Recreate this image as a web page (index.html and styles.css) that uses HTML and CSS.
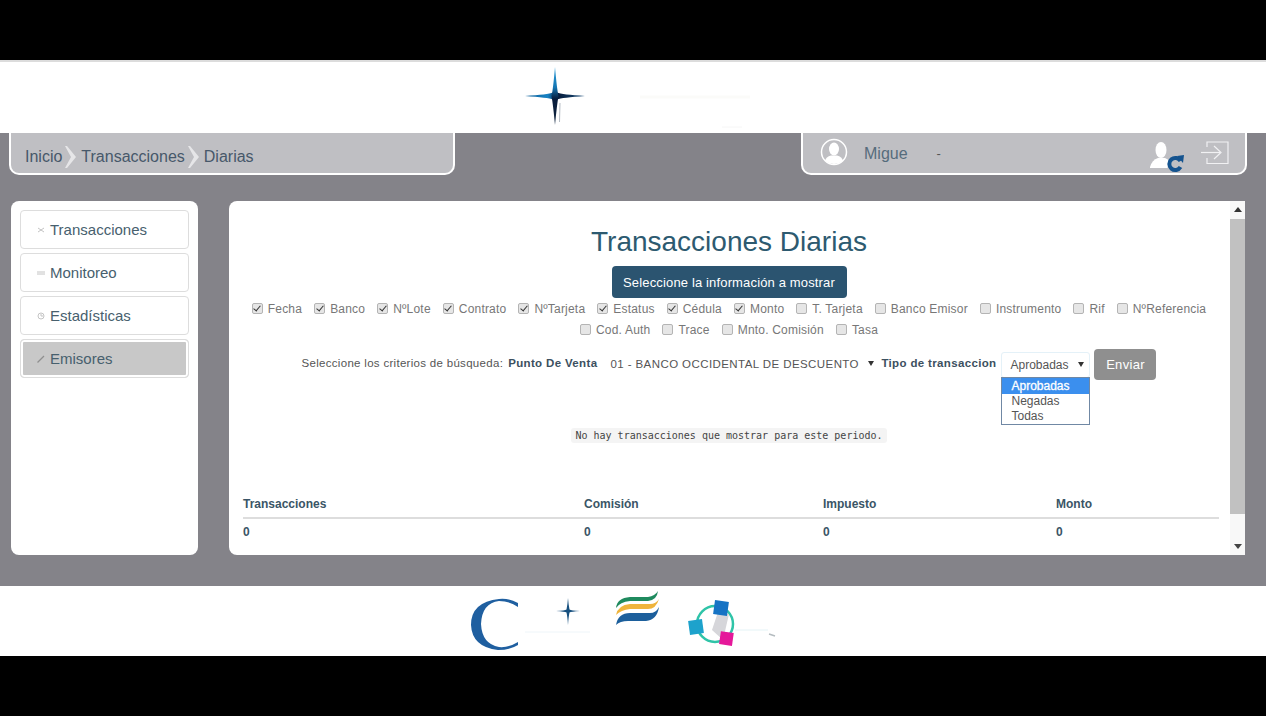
FILE: index.html
```html
<!DOCTYPE html>
<html lang="es">
<head>
  <meta charset="UTF-8" />
  <title>Transacciones Diarias</title>
  <link rel="stylesheet" href="styles.css">
</head>
<body>

<div class="franja"></div>

<header class="cabecera">
  <svg class="logo-top" viewBox="420 62 426 71" width="426" height="71">
    <defs>
      <linearGradient id="estV" x1="0" y1="0" x2="0" y2="1">
        <stop offset="0" stop-color="#2a9ad6"/>
        <stop offset="0.35" stop-color="#1577b4"/>
        <stop offset="0.55" stop-color="#071c3c"/>
        <stop offset="1" stop-color="#12263f"/>
      </linearGradient>
      <linearGradient id="estH" x1="0" y1="0" x2="1" y2="0">
        <stop offset="0" stop-color="#0f5f96"/>
        <stop offset="0.38" stop-color="#1782c4"/>
        <stop offset="0.55" stop-color="#071c3c"/>
        <stop offset="1" stop-color="#1a4f7c"/>
      </linearGradient>
    </defs>
    <path d="M525 96 Q548 94.500 553 92.500 L557 92.500 Q562 94.500 585 96 Q562 97.500 557 99.500 L553 99.500 Q548 97.500 525 96Z" fill="url(#estH)"/>
    <path d="M555 67 Q557 90 558.500 96 Q557 104 555 125 Q553 104 551.500 96 Q553 90 555 67Z" fill="url(#estV)"/>
    <path d="M560 103 L559.500 122" stroke="#b5bcc4" stroke-width="1"/>
    <path d="M640 97 H750" stroke="#fbfbf9" stroke-width="3"/>
    <path d="M722 127 H742" stroke="#f6f6f6" stroke-width="1"/>
  </svg>
</header>

<div class="zona">
  <div class="barras">
    <nav class="barra migas">
      <a>Inicio</a>
      <svg class="flecha" viewBox="0 0 12 22" width="12" height="22"><path d="M2 0 L11 11 L2 22 H0 L6 11 L0 0Z" fill="#e6e6e8"/></svg>
      <a>Transacciones</a>
      <svg class="flecha" viewBox="0 0 12 22" width="12" height="22"><path d="M2 0 L11 11 L2 22 H0 L6 11 L0 0Z" fill="#e6e6e8"/></svg>
      <a>Diarias</a>
    </nav>
    <div class="barra usuario">
      <svg class="avatar" viewBox="0 0 28 28" width="28" height="28">
        <circle cx="14" cy="14" r="12.500" fill="none" stroke="#fff" stroke-width="1.500"/>
        <ellipse cx="14" cy="11" rx="5" ry="6.500" fill="#fff"/>
        <path d="M5 23 Q6 18.500 11 17.500 H17 Q22 18.500 23 23 Q14 29 5 23Z" fill="#fff"/>
      </svg>
      <span class="nombre">Migue</span>
      <span class="guion">-</span>
      <span class="relleno"></span>
      <svg class="ico-cambio" viewBox="0 0 36 32" width="36" height="32">
        <ellipse cx="12" cy="9" rx="5.500" ry="8" fill="#fff"/>
        <path d="M1 26 Q3 19 9 17 H16 Q21 19 22 24 L18 27 H1Z" fill="#fff"/>
        <path d="M31.500 20 A6 6 0 1 0 31.500 26" fill="none" stroke="#14538f" stroke-width="4"/>
        <path d="M28 15 L35 14 L34 22Z" fill="#14538f"/>
      </svg>
      <svg class="ico-salir" viewBox="0 0 28 24" width="28" height="24" fill="none" stroke="#f1f1f3" stroke-width="1.200">
        <path d="M6 6 V1 H27 V22.500 H6 V17"/>
        <path d="M0 11.500 H19"/>
        <path d="M13 5 L20 11.500 L13 18"/>
      </svg>
    </div>
  </div>

  <div class="columnas">
    <aside class="lateral">
      <a class="opcion">
        <svg viewBox="0 0 8 8" width="8" height="8" fill="none" stroke="#c4c4c4"><path d="M1 2 L7 6 M1 6 L7 2"/></svg>
        Transacciones
      </a>
      <a class="opcion">
        <svg viewBox="0 0 8 8" width="8" height="8" fill="none" stroke="#c4c4c4"><path d="M0 3 H8 M0 5 H8"/></svg>
        Monitoreo
      </a>
      <a class="opcion">
        <svg viewBox="0 0 8 8" width="8" height="8" fill="none" stroke="#c4c4c4"><circle cx="4" cy="4" r="3"/><path d="M4 2 V4 H6"/></svg>
        Estadísticas
      </a>
      <a class="opcion activa">
        <svg viewBox="0 0 8 8" width="8" height="8" fill="none" stroke="#8f8f8f" stroke-width="1.200"><path d="M0.500 7.500 L7 1"/></svg>
        Emisores
      </a>
    </aside>

    <main class="panel">
      <div class="contenido">
        <h1>Transacciones Diarias</h1>
        <button class="btn-info" type="button">Seleccione la información a mostrar</button>

        <div class="campos">
          <label><input type="checkbox" checked>Fecha</label>
          <label><input type="checkbox" checked>Banco</label>
          <label><input type="checkbox" checked>NºLote</label>
          <label><input type="checkbox" checked>Contrato</label>
          <label><input type="checkbox" checked>NºTarjeta</label>
          <label><input type="checkbox" checked>Estatus</label>
          <label><input type="checkbox" checked>Cédula</label>
          <label><input type="checkbox" checked>Monto</label>
          <label><input type="checkbox">T. Tarjeta</label>
          <label><input type="checkbox">Banco Emisor</label>
          <label><input type="checkbox">Instrumento</label>
          <label><input type="checkbox">Rif</label>
          <label><input type="checkbox">NºReferencia</label>
          <label><input type="checkbox">Cod. Auth</label>
          <label><input type="checkbox">Trace</label>
          <label><input type="checkbox">Mnto. Comisión</label>
          <label><input type="checkbox">Tasa</label>
        </div>

        <form class="criterios">
          <span class="rotulo">Seleccione los criterios de búsqueda:</span>
          <b>Punto De Venta</b>
          <span class="combo combo-banco">01 - BANCO OCCIDENTAL DE DESCUENTO<i class="punta"></i></span>
          <b>Tipo de transaccion</b>
          <span class="combo combo-tipo">
            Aprobadas<i class="punta"></i>
            <ul class="lista">
              <li class="marcada">Aprobadas</li>
              <li>Negadas</li>
              <li>Todas</li>
            </ul>
          </span>
          <button class="btn-enviar" type="button">Enviar</button>
        </form>

        <p class="aviso"><code>No hay transacciones que mostrar para este periodo.</code></p>

        <table class="totales">
          <thead>
            <tr><th>Transacciones</th><th>Comisión</th><th>Impuesto</th><th>Monto</th></tr>
          </thead>
          <tbody>
            <tr><td>0</td><td>0</td><td>0</td><td>0</td></tr>
          </tbody>
        </table>
      </div>
      <div class="scroll">
        <i class="sube"></i>
        <div class="pista"><div class="pulgar"></div></div>
        <i class="baja"></i>
      </div>
    </main>
  </div>
</div>

<footer class="pie">
  <svg class="logos" viewBox="460 586 346 70" width="346" height="70">
    <path d="M518 603 Q509 598 499 599 Q471 602 471 625 Q472 647 498 650 Q510 650 518 645 V642 Q508 648 499 647 Q482 644 481 624 Q482 603 499 601 Q510 601 518 607Z" fill="#1f5fa0"/>
    <path d="M556 611 Q565 610.500 566.500 609.500 Q567.500 605 568 598 Q568.500 605 569.500 609.500 Q571 610.500 580 611 Q571 611.500 569.500 612.500 Q568.500 617 568 625 Q567.500 617 566.500 612.500 Q565 611.500 556 611Z" fill="#17507f"/>
    <path d="M616 608 Q617 598 630 597 H648 Q655 596 658 591 Q657 600 648 601 H630 Q620 602 616 608Z" fill="#1f8a5e"/>
    <path d="M616 615 Q618 605 630 604 H650 Q656 604 659 599 Q656 609 648 609 H630 Q621 610 616 615Z" fill="#efb43c"/>
    <path d="M616 625 Q618 613 630 613 H650 Q656 613 659 607 Q657 620 646 621 H628 Q620 621 616 625Z" fill="#1c5f9c"/>
    <circle cx="715" cy="624" r="18" fill="none" stroke="#2fc4a8" stroke-width="2.500"/>
    <path d="M718 612 L729 614 L723 640 L712 630Z" fill="#d6d6da"/>
    <rect x="714" y="601" width="14" height="14" fill="#1673c4" transform="rotate(8 721 608)"/>
    <rect x="689" y="620" width="14" height="14" fill="#1da2cc" transform="rotate(-8 696 627)"/>
    <rect x="720" y="632" width="13" height="13" fill="#e5189a" transform="rotate(8 726 638)"/>
    <path d="M525 632 H590" stroke="#eef5f9" stroke-width="1"/>
    <path d="M735 630 H768" stroke="#e4f3f6" stroke-width="1"/>
    <path d="M769 634 L775 636" stroke="#b5bcc0" stroke-width="1.500"/>
  </svg>
</footer>

<div class="franja franja-baja"></div>

</body>
</html>
```

FILE: styles.css
```css
body {
  margin: 0;
  height: 716px;
  overflow: hidden;
  background-color: #000;
  font-family: "Liberation Sans", Arial, sans-serif;
  color: #2b5068;
}
.franja {
  height: 60px;
  background-color: #000;
}
.franja-baja {
  height: 60px;
}
.cabecera {
  height: 71px;
  background-color: #fff;
  border-top: 2px solid #dcdcdc;
  display: flex;
  justify-content: center;
}
.pie {
  height: 70px;
  background-color: #fff;
  display: flex;
  justify-content: center;
}
.zona {
  height: 453px;
  background-color: #848389;
  box-sizing: border-box;
}
.barras {
  display: flex;
  justify-content: space-between;
  padding: 0 19px 0 9px;
}
.barra {
  box-sizing: border-box;
  height: 42px;
  width: 446px;
  background-color: #bfbfc3;
  border: 2px solid #fff;
  border-top: none;
  border-radius: 0 0 10px 10px;
  display: flex;
  align-items: center;
}
.migas {
  padding: 8px 0 0 14px;
  font-size: 16px;
  color: #47586a;
  gap: 3px;
}
.flecha {
  margin-top: -1px;
  margin-right: 1px;
}
.usuario {
  padding: 0 16px 2px 17px;
  color: #566c7c;
  font-size: 16px;
}
.nombre {
  margin: 4px 0 0 16px;
}
.guion {
  margin: 2px 0 0 29px;
  font-size: 13px;
  color: #555;
}
.relleno {
  flex: 1;
}
.ico-cambio {
  margin: 10px 16px 0 0;
}
.ico-salir {
  margin-top: 2px;
}
.columnas {
  display: flex;
  gap: 31px;
  margin: 26px 0 0 11px;
}
.lateral {
  box-sizing: border-box;
  width: 187px;
  height: 354px;
  background-color: #fff;
  border-radius: 8px;
  padding: 9px 9px 0;
  display: flex;
  flex-direction: column;
  gap: 4px;
}
.opcion {
  box-sizing: border-box;
  height: 39px;
  border: 1px solid #ddd;
  border-radius: 4px;
  display: flex;
  align-items: center;
  gap: 5px;
  padding-left: 16px;
  font-size: 15px;
  color: #47606e;
}
.activa {
  background-color: #c8c8c8;
  box-shadow: inset 0 0 0 2px #fff;
}
.panel {
  width: 1016px;
  height: 354px;
  background-color: #fff;
  border-radius: 8px 0 0 8px;
  display: flex;
}
.contenido {
  box-sizing: border-box;
  flex: 1;
  padding: 0 11px 0 10px;
  display: flex;
  flex-direction: column;
  align-items: center;
}
h1 {
  margin: 25px 0 0;
  font-size: 28px;
  font-weight: normal;
  line-height: 31px;
  color: #2d5a70;
}
.btn-info {
  margin-top: 9px;
  width: 235px;
  height: 32px;
  padding: 0;
  border: none;
  border-radius: 4px;
  background-color: #2b5470;
  color: #fff;
  font-family: inherit;
  font-size: 13px;
  letter-spacing: 0.15px;
}
.campos {
  width: 976px;
  margin-top: 1px;
  display: flex;
  flex-wrap: wrap;
  justify-content: center;
  column-gap: 12px;
  font-size: 12px;
  line-height: 21px;
  color: #777;
}
.campos label {
  display: flex;
  align-items: center;
  letter-spacing: 0.2px;
}
.campos input {
  appearance: none;
  box-sizing: border-box;
  position: relative;
  margin: 0 5px 3px 0;
  width: 11px;
  height: 11px;
  border: 1px solid #b4b4b4;
  border-radius: 2px;
  background-color: #e6e6e6;
}
.campos input:checked::after {
  content: "";
  position: absolute;
  left: 2.500px;
  top: 0;
  width: 3px;
  height: 6px;
  border: solid #333;
  border-width: 0 1.500px 1.500px 0;
  transform: rotate(40deg);
}
.criterios {
  margin-top: 8px;
  display: flex;
  align-items: center;
  font-size: 11.5px;
  letter-spacing: 0.35px;
  color: #555;
  height: 31px;
}
.rotulo {
  letter-spacing: 0.3px;
  padding-bottom: 3px;
}
.criterios b {
  color: #3c5060;
  padding-bottom: 3px;
}
.criterios > b:first-of-type {
  margin-left: 5px;
}
.combo {
  box-sizing: border-box;
  height: 26px;
  display: flex;
  align-items: center;
  position: relative;
  color: #555;
}
.combo-banco {
  width: 284px;
  padding-left: 13px;
  padding-bottom: 2px;
  letter-spacing: 0.42px;
}
.combo-tipo {
  width: 89px;
  margin-left: 5px;
  padding-left: 8px;
  border: 1px solid #e4f1f8;
  border-radius: 3px;
  font-size: 12px;
  letter-spacing: 0;
}
.punta {
  margin-left: 9px;
  border-top: 5px solid #333;
  border-left: 3px solid transparent;
  border-right: 3px solid transparent;
}
.lista {
  position: absolute;
  left: -1px;
  top: 24px;
  width: 87px;
  margin: 0;
  padding: 0;
  list-style: none;
  background-color: #fff;
  border: 1px solid #7088a4;
  font-size: 12px;
  line-height: 15px;
  color: #555;
}
.lista li {
  padding-left: 9px;
}
.marcada {
  background-color: #3b8fee;
  color: #fff;
  -webkit-text-stroke: 0.3px #fff;
  line-height: 16px;
}
.btn-enviar {
  margin-left: 4px;
  width: 62px;
  height: 31px;
  padding: 0;
  border: none;
  border-radius: 4px;
  background-color: #8f8f8f;
  color: #fff;
  font-family: inherit;
  font-size: 13px;
  letter-spacing: 0.3px;
}
.aviso {
  margin: 46px 0 0;
  line-height: 16px;
}
.aviso code {
  font-family: "DejaVu Sans Mono", monospace;
  font-size: 10px;
  padding: 2px 4px;
  background-color: #f4f4f4;
  border-radius: 3px;
  color: #444;
}
.totales {
  align-self: flex-start;
  width: 976px;
  margin: 52px 0 0 4px;
  border-collapse: collapse;
  table-layout: fixed;
  font-size: 12px;
  font-weight: bold;
  text-align: left;
  color: #3a5566;
}
.totales th {
  padding: 0 0 5px;
  line-height: 16px;
  border-bottom: 2px solid #ddd;
}
.totales td {
  padding: 5px 0 0;
  line-height: 16px;
}
.totales th:nth-child(1) {
  width: 341px;
}
.totales th:nth-child(2) {
  width: 239px;
}
.totales th:nth-child(3) {
  width: 233px;
}
.scroll {
  width: 15px;
  display: flex;
  flex-direction: column;
  align-items: center;
  background-color: #f8f8f8;
}
.sube,
.baja {
  flex: none;
  margin: 6px 0;
  border-left: 4px solid transparent;
  border-right: 4px solid transparent;
}
.sube {
  border-bottom: 5px solid #333;
}
.baja {
  border-top: 5px solid #444;
}
.pista {
  flex: 1;
  width: 100%;
}
.pulgar {
  height: 295px;
  margin-top: 1px;
  background-color: #c1c1c1;
}
```
